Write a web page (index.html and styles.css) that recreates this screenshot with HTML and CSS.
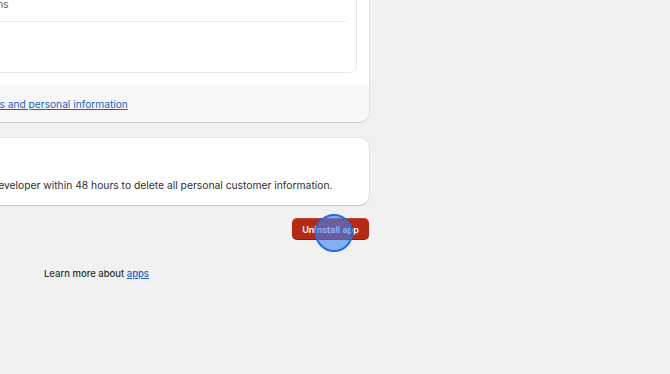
FILE: index.html
```html
<!DOCTYPE html>
<html lang="en">
<head>
    <meta charset="UTF-8">
    <meta name="viewport" content="width=device-width, initial-scale=1.0">
    <title>App details</title>
    <link rel="stylesheet" href="styles.css">
</head>
<body>

    <div class="page">
        <div class="card card-top">
            <div class="card-body">
                <div class="box">
                    <div class="box-row">View and edit all app permissions</div>
                    <div class="box-row box-row-empty"></div>
                </div>
            </div>
            <div class="card-footer">
                <a href="#">Learn more about customer details and personal information</a>
            </div>
        </div>

        <div class="card card-remove">
            <h2>Customer data</h2>
            <p>A request is then sent to the app developer within 48 hours to delete all personal customer information.</p>
        </div>

        <div class="actions">
            <button class="btn-danger">Uninstall app</button>
            <span class="click-dot"></span>
        </div>

        <p class="help">Learn more about <a href="#">apps</a></p>
    </div>

</body>
</html>
```

FILE: styles.css
```css
body {
    margin: 0;
    background-color: #f1f1f1;
    font-family: Inter, "Noto Sans", sans-serif;
    font-size: 10.1px;
    color: #303030;
    overflow: hidden;
}
a {
    color: #1c5fc4;
    text-decoration: underline;
}
.page {
    width: 545px;
    margin-left: -176px;
    margin-top: -19px;
}
.card {
    background-color: #fff;
    border-radius: 10px;
    box-shadow: 0 1px 0 rgba(0, 0, 0, 0.12), 0 0 0 1px rgba(0, 0, 0, 0.05);
}
.card-body {
    padding: 12px 12px 12px;
}
.box {
    border: 1px solid #e8e8e8;
    border-radius: 8px;
}
.box-row {
    margin: 0 10px;
    padding: 4px 2px 10px;
    line-height: 13px;
    color: #616161;
    border-bottom: 1px solid #ebebeb;
}
.box-row-empty {
    border-bottom: none;
    height: 36px;
}
.card-footer {
    background-color: #f7f7f7;
    padding: 13px 16px 11px 13px;
    font-size: 10.2px;
    line-height: 13px;
    border-radius: 0 0 10px 10px;
}
.card-remove {
    margin-top: 16px;
    padding: 16px 16px 13px 7px;
}
.card-remove h2 {
    margin: 0 0 12px;
    font-size: 10.1px;
    font-weight: 600;
    line-height: 13px;
}
.card-remove p {
    margin: 0;
    font-size: 10.3px;
    line-height: 13px;
    white-space: nowrap;
}
.actions {
    position: relative;
    display: flex;
    justify-content: flex-end;
    margin-top: 13px;
}
.btn-danger {
    width: 77px;
    height: 22px;
    padding: 0;
    border: none;
    border-radius: 5px;
    background-color: #b52a14;
    box-shadow: inset 0 -1px 0 rgba(0, 0, 0, 0.3), inset 0 1px 0 rgba(255, 255, 255, 0.15);
    color: #fff;
    font-family: inherit;
    font-size: 9px;
    font-weight: 600;
}
.click-dot {
    position: absolute;
    right: 16px;
    top: -4px;
    width: 34px;
    height: 34px;
    border-radius: 50%;
    border: 2px solid #1f6fe5;
    background-color: rgba(60, 130, 245, 0.6);
}
.help {
    margin: 27px 0 0;
    text-align: center;
    font-size: 9.5px;
    font-weight: 500;
    line-height: 13px;
}
```
